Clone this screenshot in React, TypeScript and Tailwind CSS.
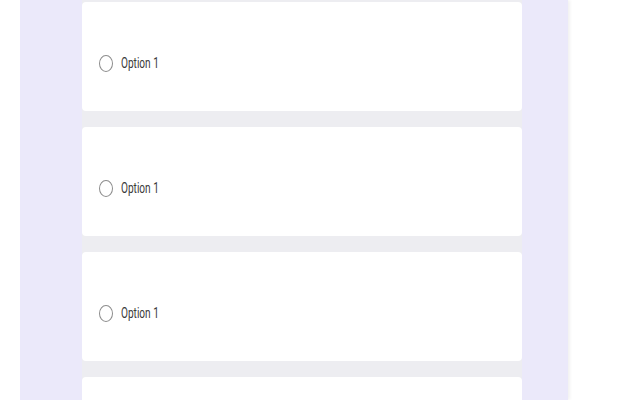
import React from "react";

function Card({ empty = false }: { empty?: boolean }) {
  return (
    <div className="h-[109px] w-full shrink-0 rounded-[4px] bg-white pl-[17px] pt-[53px]">
      {!empty && (
        <div className="flex items-center">
          <div className="h-[17px] w-[14px] rounded-[50%] border-[1.5px] border-[#8c8c8c]" />
          <span
            className="ml-[8px] inline-block origin-left scale-x-[0.72] text-[14px] leading-[17px] text-[#3a3a3a]"
            style={{ fontFamily: "Roboto, 'Liberation Sans', sans-serif" }}
          >
            Option 1
          </span>
        </div>
      )}
    </div>
  );
}

export default function App() {
  return (
    <div className="flex h-[400px] w-[640px] overflow-hidden bg-white">
      <div className="ml-[20px] h-full w-[548px] bg-[#ebe9fa] shadow-[2px_0_3px_rgba(0,0,0,0.06)]">
        <div className="ml-[62px] flex h-full w-[440px] flex-col gap-4 bg-[#ededf1] pt-[2px]">
          <Card />
          <Card />
          <Card />
          <Card empty />
        </div>
      </div>
    </div>
  );
}
